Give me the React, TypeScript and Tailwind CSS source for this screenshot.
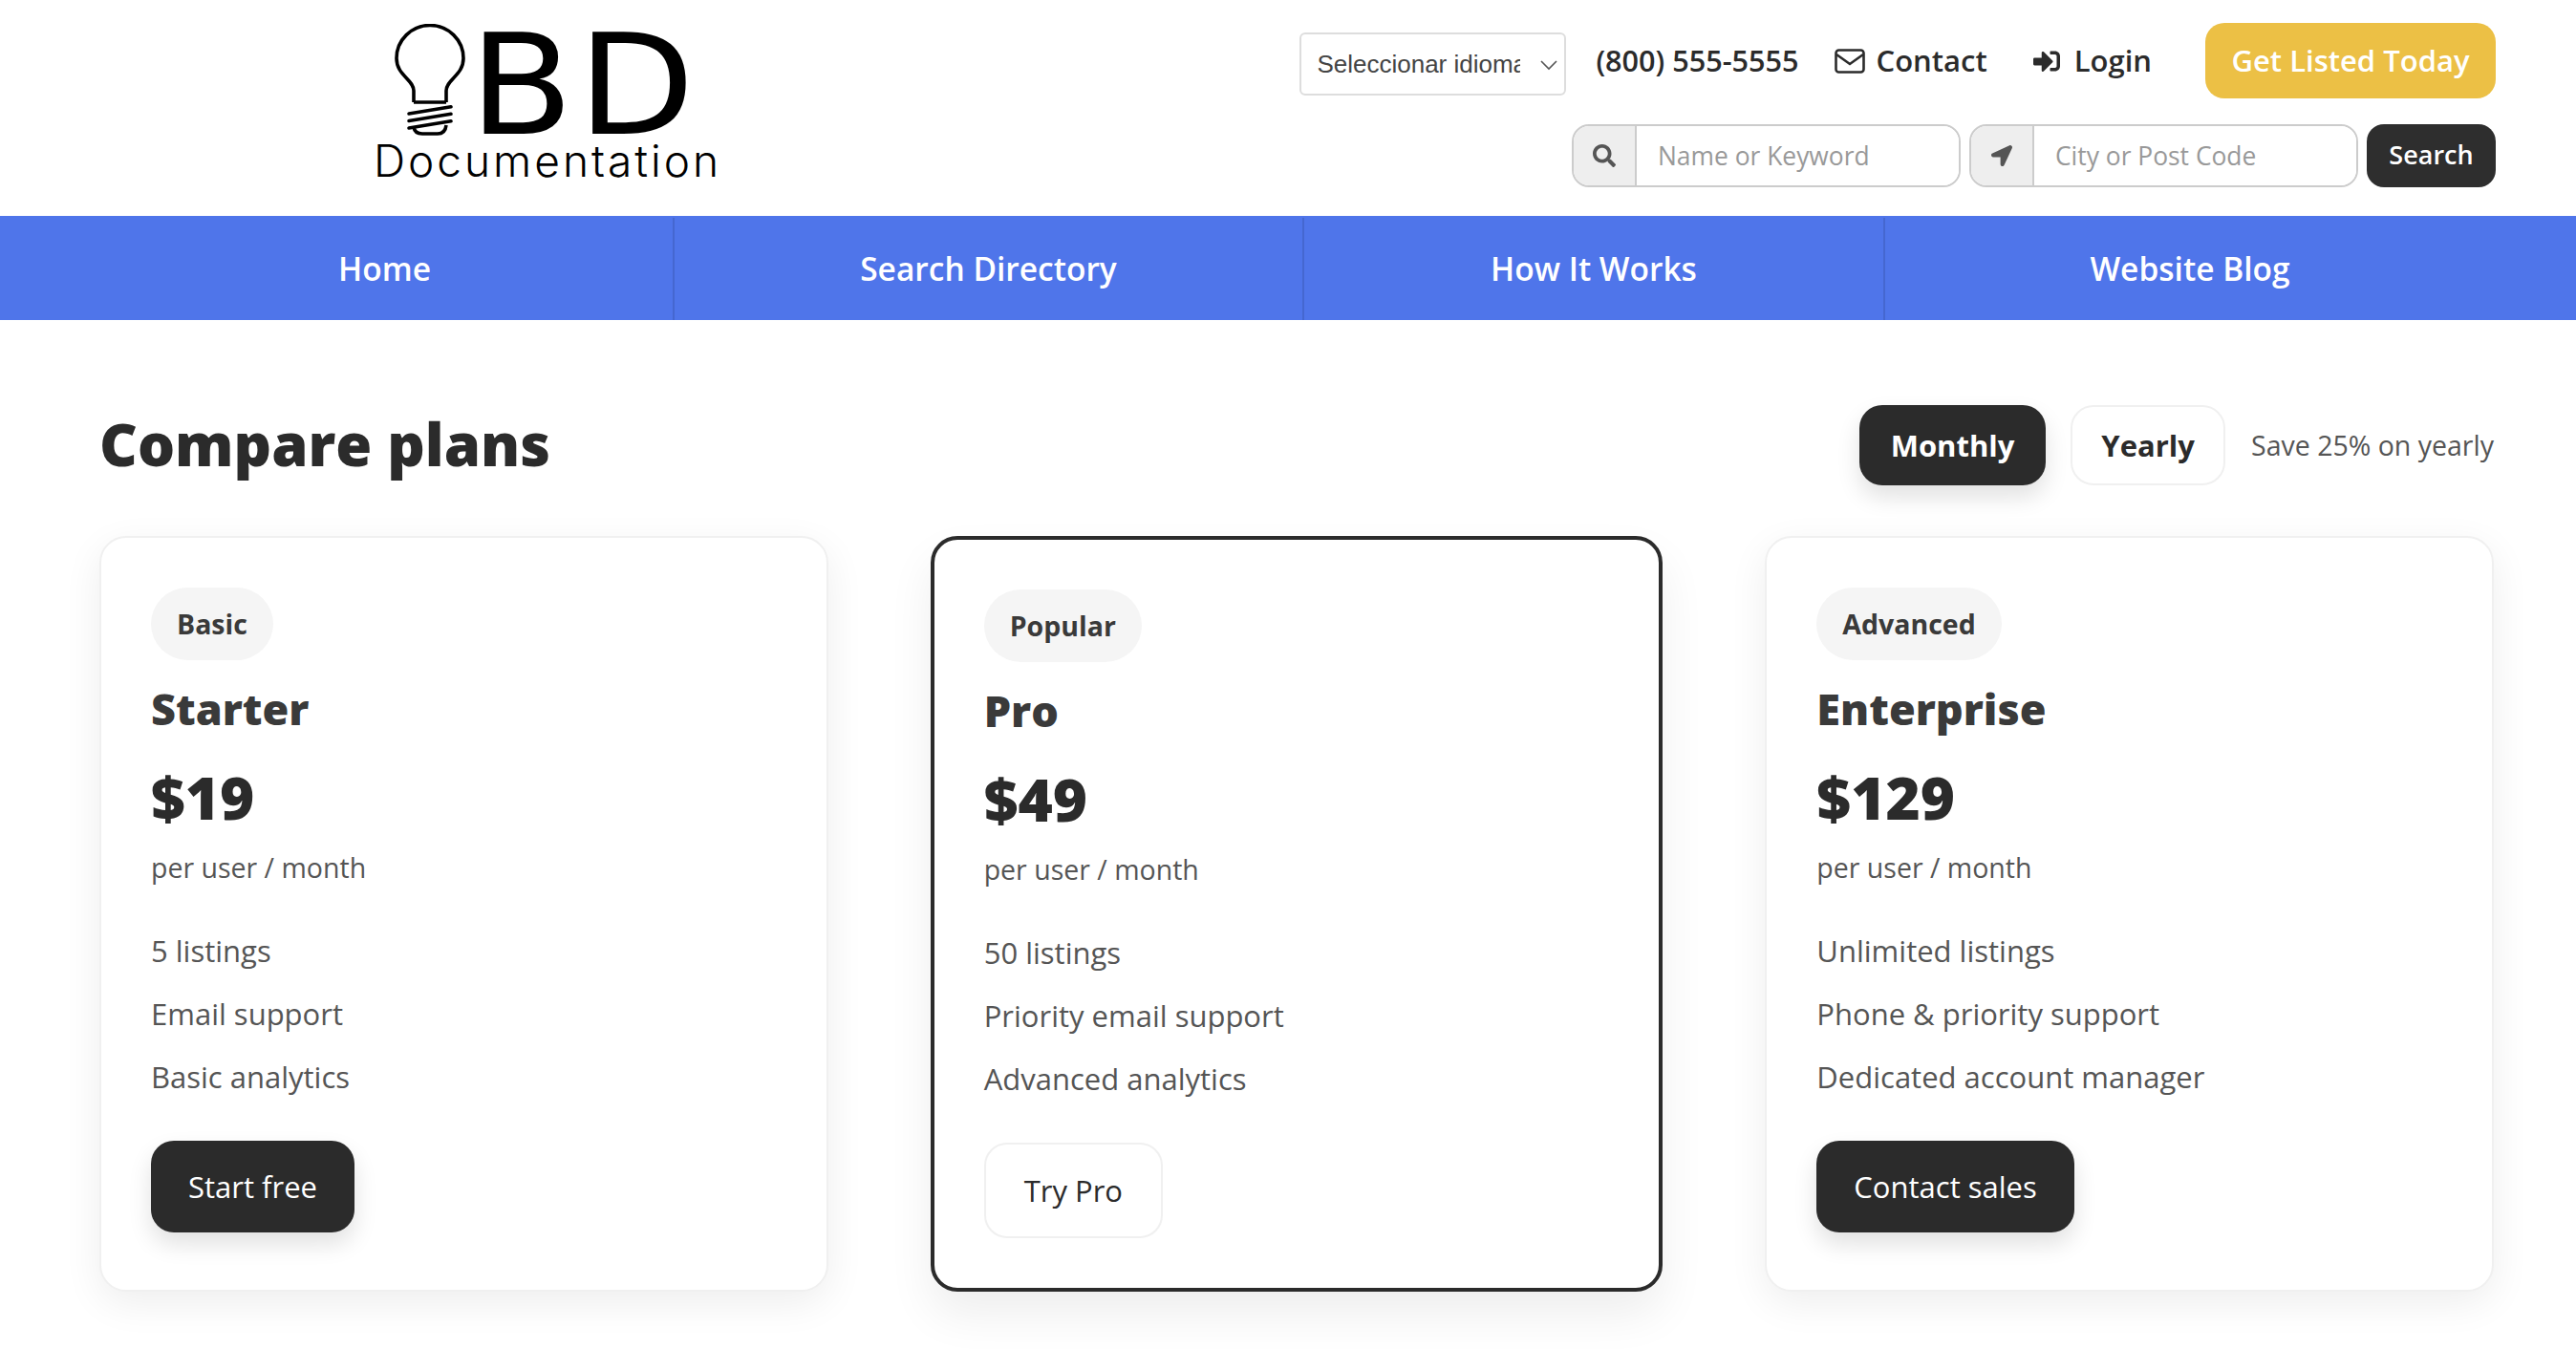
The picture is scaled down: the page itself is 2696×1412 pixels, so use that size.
import { FaSearch, FaLocationArrow, FaSignInAlt } from 'react-icons/fa';

// Plan cards data
const PLANS = [
  {
    tag: 'Basic',
    name: 'Starter',
    price: '$19',
    features: ['5 listings', 'Email support', 'Basic analytics'],
    cta: 'Start free',
    featured: false,
  },
  {
    tag: 'Popular',
    name: 'Pro',
    price: '$49',
    features: ['50 listings', 'Priority email support', 'Advanced analytics'],
    cta: 'Try Pro',
    featured: true,
  },
  {
    tag: 'Advanced',
    name: 'Enterprise',
    price: '$129',
    features: ['Unlimited listings', 'Phone & priority support', 'Dedicated account manager'],
    cta: 'Contact sales',
    featured: false,
  },
];

function Logo() {
  return (
    <div className="flex w-[372px] flex-col items-center">
      <div className="mr-[22px] flex h-[118px] items-start">
        <svg width="74" height="118" viewBox="0 0 74 118" fill="none" stroke="#000" strokeWidth="3.6" className="mt-[-2px] mr-[4px] shrink-0">
          <path d="M20 82 V70 C20 58 2 54 2 36 A35 34.5 0 0 1 72 36 C72 54 54 58 54 70 V82 M20 82 H54" />
          <path d="M20 108 Q21 115 29 115 H45 Q53 115 54 106" />
          <path d="M15 94 L59 86.7 M15 101.5 L59 94.2 M15 109 L59 101.7" strokeLinecap="round" />
        </svg>
        <span className="mt-[3px] inline-block origin-left scale-x-[1.09] font-['DejaVu_Sans',sans-serif] text-[146px] leading-[118px] tracking-[4px] text-black">BD</span>
      </div>
      <span className="font-['Inter',sans-serif] text-[46px] leading-[46px] font-[300] tracking-[3px] whitespace-nowrap text-black">Documentation</span>
    </div>
  );
}

function SearchField({ icon, placeholder }: { icon: React.ReactNode; placeholder: string }) {
  return (
    <div className="flex h-[66px] w-[407px] overflow-hidden rounded-[18px] border-[2px] border-[#cccccc] bg-white">
      <span className="flex w-[66px] shrink-0 items-center justify-center border-r-[2px] border-[#cccccc] bg-[#eeeeee] text-[#555555]">
        {icon}
      </span>
      <input
        placeholder={placeholder}
        className="min-w-0 flex-1 bg-white px-[22px] pt-[2px] text-[26.4px] text-[#555555] outline-none placeholder:text-[#999999]"
      />
    </div>
  );
}

function PlanCard({ plan }: { plan: (typeof PLANS)[number] }) {
  return (
    <div
      className={`flex-1 rounded-[28px] bg-white p-[52px] ${
        plan.featured
          ? 'border-[4px] border-[#2b2b2b] shadow-[0_24px_48px_rgba(0,0,0,0.07)]'
          : 'border-[2px] border-[#f0f0f0] shadow-[0_12px_40px_rgba(0,0,0,0.07)]'
      }`}
    >
      <span className="inline-flex h-[76px] items-center rounded-full bg-[#f5f5f5] px-[27px] text-[28.5px] font-bold text-[#3a3a3a]">
        {plan.tag}
      </span>
      <h3 className="mt-[20px] text-[45px] leading-[62px] font-extrabold text-[#3a3a3a]">{plan.name}</h3>
      <div className="mt-[18px] text-[62px] leading-[86px] font-extrabold text-[#2b2b2b]">{plan.price}</div>
      <div className="mt-[9px] text-[28.5px] leading-[44px] text-[#555555]">per user / month</div>
      <ul className="mt-[43px] flex flex-col gap-[22px]">
        {plan.features.map((f) => (
          <li key={f} className="text-[31px] leading-[44px] text-[#555555]">
            {f}
          </li>
        ))}
      </ul>
      {plan.featured ? (
        <button className="mt-[45px] flex h-[100px] items-center rounded-[24px] border-[2px] border-[#f0f0f0] bg-white px-[40px] text-[31px] text-[#2b2b2b]">
          {plan.cta}
        </button>
      ) : (
        <button className="mt-[45px] flex h-[96px] items-center rounded-[24px] bg-[#2b2b2b] px-[39px] text-[31px] font-medium text-white shadow-[0_12px_24px_rgba(0,0,0,0.12)]">
          {plan.cta}
        </button>
      )}
    </div>
  );
}

export default function App() {
  return (
    <div className="min-h-[1412px] bg-white font-['Open_Sans',sans-serif] text-[#2b2b2b]">
      {/* Header */}
      <header className="flex h-[226px] items-start justify-between pr-[84px] pl-[387px]">
        <div className="mt-[27px]">
          <Logo />
        </div>
        <div className="flex flex-col items-end">
          <div className="mt-[24px] flex h-[79px] items-center">
            <div className="relative mt-[7px]">
              <select className="h-[66px] w-[279px] appearance-none rounded-[6px] border-[2px] border-[#dddddd] bg-white pr-[46px] pl-[16px] font-['Liberation_Sans',sans-serif] text-[26px] text-[#444444] outline-none">
                <option>Seleccionar idioma</option>
              </select>
              <svg width="20" height="12" viewBox="0 0 20 12" fill="none" stroke="#555" strokeWidth="1.6" className="pointer-events-none absolute top-[28px] right-[8px]">
                <path d="M2 2 L10 10 L18 2" />
              </svg>
            </div>
            <span className="ml-[31px] text-[30.6px] font-semibold">(800) 555-5555</span>
            <svg width="32" height="26" viewBox="0 0 32 26" fill="none" stroke="#2b2b2b" strokeWidth="2.6" className="ml-[37px]">
              <rect x="1.5" y="1.5" width="29" height="23" rx="3" />
              <path d="M2 6 L16 16 L30 6" />
            </svg>
            <span className="ml-[12px] text-[31px] font-semibold">Contact</span>
            <FaSignInAlt className="ml-[48px] text-[28px]" />
            <span className="ml-[15px] text-[31px] font-semibold">Login</span>
            <button className="ml-[56px] h-[79px] w-[304px] rounded-[20px] bg-[#ecc045] text-[31px] font-semibold text-white">
              Get Listed Today
            </button>
          </div>
          <div className="mt-[27px] flex gap-[9px]">
            <SearchField icon={<FaSearch className="text-[24px]" />} placeholder="Name or Keyword" />
            <SearchField icon={<FaLocationArrow className="text-[22px]" />} placeholder="City or Post Code" />
            <button className="h-[66px] w-[135px] rounded-[18px] bg-[#2e2e2e] pb-[2px] text-[27px] font-semibold text-white">Search</button>
          </div>
        </div>
      </header>

      {/* Nav */}
      <nav className="flex h-[109px] bg-[#4f75ea] pt-[2px] text-[33.5px] font-semibold text-white">
        <a className="flex w-[706px] items-center justify-center border-r-[2px] border-[#4567d0] pl-[101px]">Home</a>
        <a className="flex w-[659px] items-center justify-center border-r-[2px] border-[#4567d0]">Search Directory</a>
        <a className="flex w-[608px] items-center justify-center border-r-[2px] border-[#4567d0]">How It Works</a>
        <a className="flex w-[638px] items-center justify-center">Website Blog</a>
      </nav>

      {/* Pricing */}
      <main className="pt-[89px] pr-[86px] pl-[104px]">
        <div className="flex h-[84px] items-center justify-between">
          <h2 className="pb-[3px] text-[61.5px] font-extrabold">Compare plans</h2>
          <div className="flex items-center">
            <button className="h-[84px] w-[195px] rounded-[24px] bg-[#2b2b2b] text-[31px] font-bold text-white shadow-[0_12px_24px_rgba(0,0,0,0.12)]">
              Monthly
            </button>
            <button className="ml-[26px] h-[84px] w-[162px] rounded-[24px] border-[2px] border-[#f0f0f0] bg-white text-[31px] font-bold">
              Yearly
            </button>
            <span className="ml-[27px] text-[28.5px] text-[#555555]">Save 25% on yearly</span>
          </div>
        </div>
        <div className="mt-[53px] flex gap-[107px]">
          {PLANS.map((p) => (
            <PlanCard key={p.name} plan={p} />
          ))}
        </div>
      </main>
    </div>
  );
}
